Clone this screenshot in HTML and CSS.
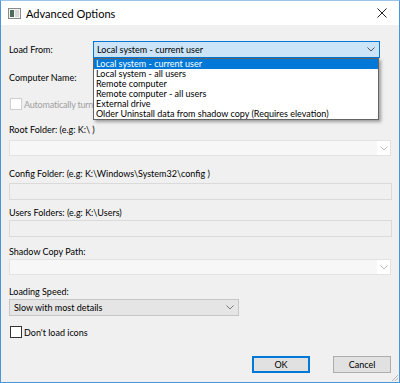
FILE: index.html
```html
<!DOCTYPE html>
<html lang="en">
<head>
  <meta charset="UTF-8">
  <title>Advanced Options</title>
  <link rel="stylesheet" href="styles.css">
</head>
<body>
  <div class="window">
    <div class="titlebar">
      <svg class="app-icon" width="13" height="11" viewBox="0 0 13 11">
        <rect x="0.5" y="0.5" width="12" height="10" fill="#f4f4f4" stroke="#8a8a8a"/>
        <rect x="2" y="2" width="4" height="7" fill="#4f6b5e"/>
        <rect x="7" y="2" width="4" height="7" fill="#d8d8d8"/>
      </svg>
      <span class="title">Advanced Options</span>
      <svg class="close" width="10" height="10" viewBox="0 0 10 10">
        <path d="M0.5 0.5 L9.5 9.5 M9.5 0.5 L0.5 9.5" stroke="#222" stroke-width="1"/>
      </svg>
    </div>

    <div class="content">
      <div class="row load-row">
        <span class="row-label">Load From:</span>
        <div class="combo combo-open">
          <span>Local system - current user</span>
          <svg class="chev" width="8" height="5" viewBox="0 0 8 5"><path d="M0.5 0.5 L4 4 L7.5 0.5" fill="none" stroke="#555"/></svg>
        </div>
        <ul class="dropdown">
          <li class="selected">Local system - current user</li>
          <li>Local system - all users</li>
          <li>Remote computer</li>
          <li>Remote computer - all users</li>
          <li>External drive</li>
          <li>Older Uninstall data from shadow copy (Requires elevation)</li>
        </ul>
      </div>

      <div class="row computer-row">
        <span class="row-label">Computer Name:</span>
        <div class="text-box"></div>
      </div>

      <label class="check check-disabled auto-row">
        <span class="box"></span>
        <span class="auto-text">Automatically turn</span>
      </label>

      <div class="field-label gap-14">Root Folder: (e.g: K:\ )</div>
      <div class="combo combo-disabled gap-4">
        <span></span>
        <span class="chev-area"><svg class="chev" width="8" height="5" viewBox="0 0 8 5"><path d="M0.5 0.5 L4 4 L7.5 0.5" fill="none" stroke="#bcbcbc"/></svg></span>
      </div>

      <div class="field-label gap-12">Config Folder: (e.g: K:\Windows\System32\config )</div>
      <div class="text-box text-disabled gap-3"></div>

      <div class="field-label gap-7">Users Folders: (e.g: K:\Users)</div>
      <div class="text-box text-disabled gap-1"></div>

      <div class="field-label gap-9">Shadow Copy Path:</div>
      <div class="combo combo-disabled gap-1">
        <span></span>
        <span class="chev-area"><svg class="chev" width="8" height="5" viewBox="0 0 8 5"><path d="M0.5 0.5 L4 4 L7.5 0.5" fill="none" stroke="#bcbcbc"/></svg></span>
      </div>

      <div class="field-label gap-11">Loading Speed:</div>
      <div class="combo combo-speed gap-1">
        <span>Slow with most details</span>
        <svg class="chev" width="8" height="5" viewBox="0 0 8 5"><path d="M0.5 0.5 L4 4 L7.5 0.5" fill="none" stroke="#7a7a7a"/></svg>
      </div>

      <label class="check icons-row">
        <span class="box box-on"></span>
        <span>Don't load icons</span>
      </label>

      <div class="buttons">
        <button class="btn btn-default">OK</button>
        <button class="btn">Cancel</button>
      </div>
    </div>

    <svg class="grip" width="9" height="9" viewBox="0 0 9 9">
      <path d="M8 2 L2 8 M8 5 L5 8 M8 8 L8 8" stroke="#b8b8b8" stroke-width="1"/>
    </svg>
  </div>
</body>
</html>
```

FILE: styles.css
```css
html, body {
  margin: 0;
  padding: 0;
  background: #f0f0f0;
}
body {
  font-family: 'Segoe UI', 'Lato', sans-serif;
  font-size: 9px;
  color: #000;
}
.window {
  position: relative;
  width: 400px;
  height: 383px;
  box-sizing: border-box;
  border: 1px solid #4d95db;
  border-top-color: #9cc4ea;
  background: #f0f0f0;
  display: flex;
  flex-direction: column;
}
.titlebar {
  height: 24px;
  background: #fff;
  display: flex;
  align-items: center;
  padding: 0 12px 0 7px;
  flex-shrink: 0;
}
.app-icon {
  margin-right: 5px;
}
.title {
  font-size: 11px;
  flex: 1;
}
.content {
  padding: 0 8px 0 8px;
  display: flex;
  flex-direction: column;
}
.row {
  display: flex;
  align-items: center;
  position: relative;
}
.row-label {
  width: 84px;
}
.load-row {
  margin-top: 16px;
}
.computer-row {
  margin-top: 11px;
}
.computer-row .text-box {
  width: 285px;
  background: #fff;
  border-color: #7a7a7a;
}
.combo {
  height: 17px;
  box-sizing: border-box;
  border: 1px solid #adadad;
  display: flex;
  align-items: center;
  padding-left: 3px;
}
.combo span:first-child {
  flex: 1;
}
.chev {
  margin-right: 4px;
}
.combo-open {
  width: 287px;
  background: #cce4f7;
  border-color: #0078d7;
}
.dropdown {
  position: absolute;
  left: 84px;
  top: 17px;
  width: 286px;
  margin: 0;
  padding: 0;
  list-style: none;
  background: #fff;
  border: 1px solid #646464;
  box-sizing: border-box;
  box-shadow: 2px 2px 3px rgba(0, 0, 0, 0.35);
  z-index: 5;
}
.dropdown li {
  height: 10px;
  line-height: 10px;
  padding-left: 2px;
  white-space: nowrap;
}
.dropdown li.selected {
  background: #0078d7;
  color: #fff;
}
.combo-disabled {
  height: 16px;
  background: #f7f7f7;
  border-color: #e2e2e2;
  padding-right: 0;
}
.chev-area {
  align-self: stretch;
  width: 13px;
  background: #fff;
  display: flex;
  align-items: center;
  justify-content: center;
}
.chev-area .chev {
  margin: 0;
}
.combo-speed {
  width: 230px;
  height: 17px;
  background: #e5e5e5;
  border-color: #c6c6c6;
  padding-left: 4px;
}
.text-box {
  height: 17px;
  box-sizing: border-box;
  border: 1px solid #dadada;
}
.text-disabled {
  background: #f0f0f0;
  margin-right: -1px;
}
.field-label {
  line-height: 12px;
  height: 12px;
  white-space: nowrap;
}
.check {
  display: flex;
  align-items: center;
  height: 12px;
  white-space: nowrap;
  padding-left: 1px;
}
.box {
  width: 12px;
  height: 12px;
  box-sizing: border-box;
  border: 1px solid #cfcfcf;
  background: #fff;
  margin-right: 2px;
}
.box-on {
  border-color: #333;
}
.check-disabled {
  color: #a0a0a0;
}
.auto-text {
  letter-spacing: -0.2px;
}
.auto-row {
  margin-top: 12px;
}
.icons-row {
  margin-top: 10px;
}
.gap-1 { margin-top: 1px; }
.gap-2 { margin-top: 2px; }
.gap-3 { margin-top: 3px; }
.gap-4 { margin-top: 4px; }
.gap-7 { margin-top: 7px; }
.gap-9 { margin-top: 9px; }
.gap-11 { margin-top: 11px; }
.gap-12 { margin-top: 12px; }
.gap-14 { margin-top: 14px; }
.buttons {
  display: flex;
  justify-content: flex-end;
  gap: 23px;
  margin-top: 18px;
}
.btn {
  width: 58px;
  height: 17px;
  box-sizing: border-box;
  font-family: inherit;
  font-size: 9px;
  background: #e1e1e1;
  border: 1px solid #adadad;
  padding: 0;
  color: #000;
}
.btn-default {
  border: 2px solid #0078d7;
}
.grip {
  position: absolute;
  right: 0;
  bottom: 0;
}
```
